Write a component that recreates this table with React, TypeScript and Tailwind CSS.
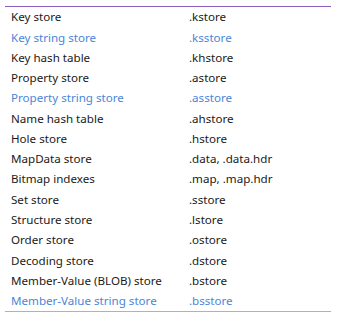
const rows: [string, string, boolean][] = [
  ['Key store', '.kstore', false],
  ['Key string store', '.ksstore', true],
  ['Key hash table', '.khstore', false],
  ['Property store', '.astore', false],
  ['Property string store', '.asstore', true],
  ['Name hash table', '.ahstore', false],
  ['Hole store', '.hstore', false],
  ['MapData store', '.data, .data.hdr', false],
  ['Bitmap indexes', '.map, .map.hdr', false],
  ['Set store', '.sstore', false],
  ['Structure store', '.lstore', false],
  ['Order store', '.ostore', false],
  ['Decoding store', '.dstore', false],
  ['Member-Value (BLOB) store', '.bstore', false],
  ['Member-Value string store', '.bsstore', true],
];

export default function App() {
  return (
    <div className="w-[338px] h-[318px] bg-white pt-[6px] px-[5px]" style={{ fontFamily: '"Noto Sans", sans-serif' }}>
      <div className="w-[326px] border-t border-b border-t-[#8b5fc0] border-b-[#bba6d8]">
        {rows.map(([name, ext, blue]) => (
          <div
            key={name}
            className={`flex h-[20.27px] items-center text-[11.6px] leading-none ${blue ? 'text-[#4a86d9]' : 'text-[#1a1a1a]'}`}
          >
            <span className="w-[184px] pl-[6px]">{name}</span>
            <span>{ext}</span>
          </div>
        ))}
      </div>
    </div>
  );
}
